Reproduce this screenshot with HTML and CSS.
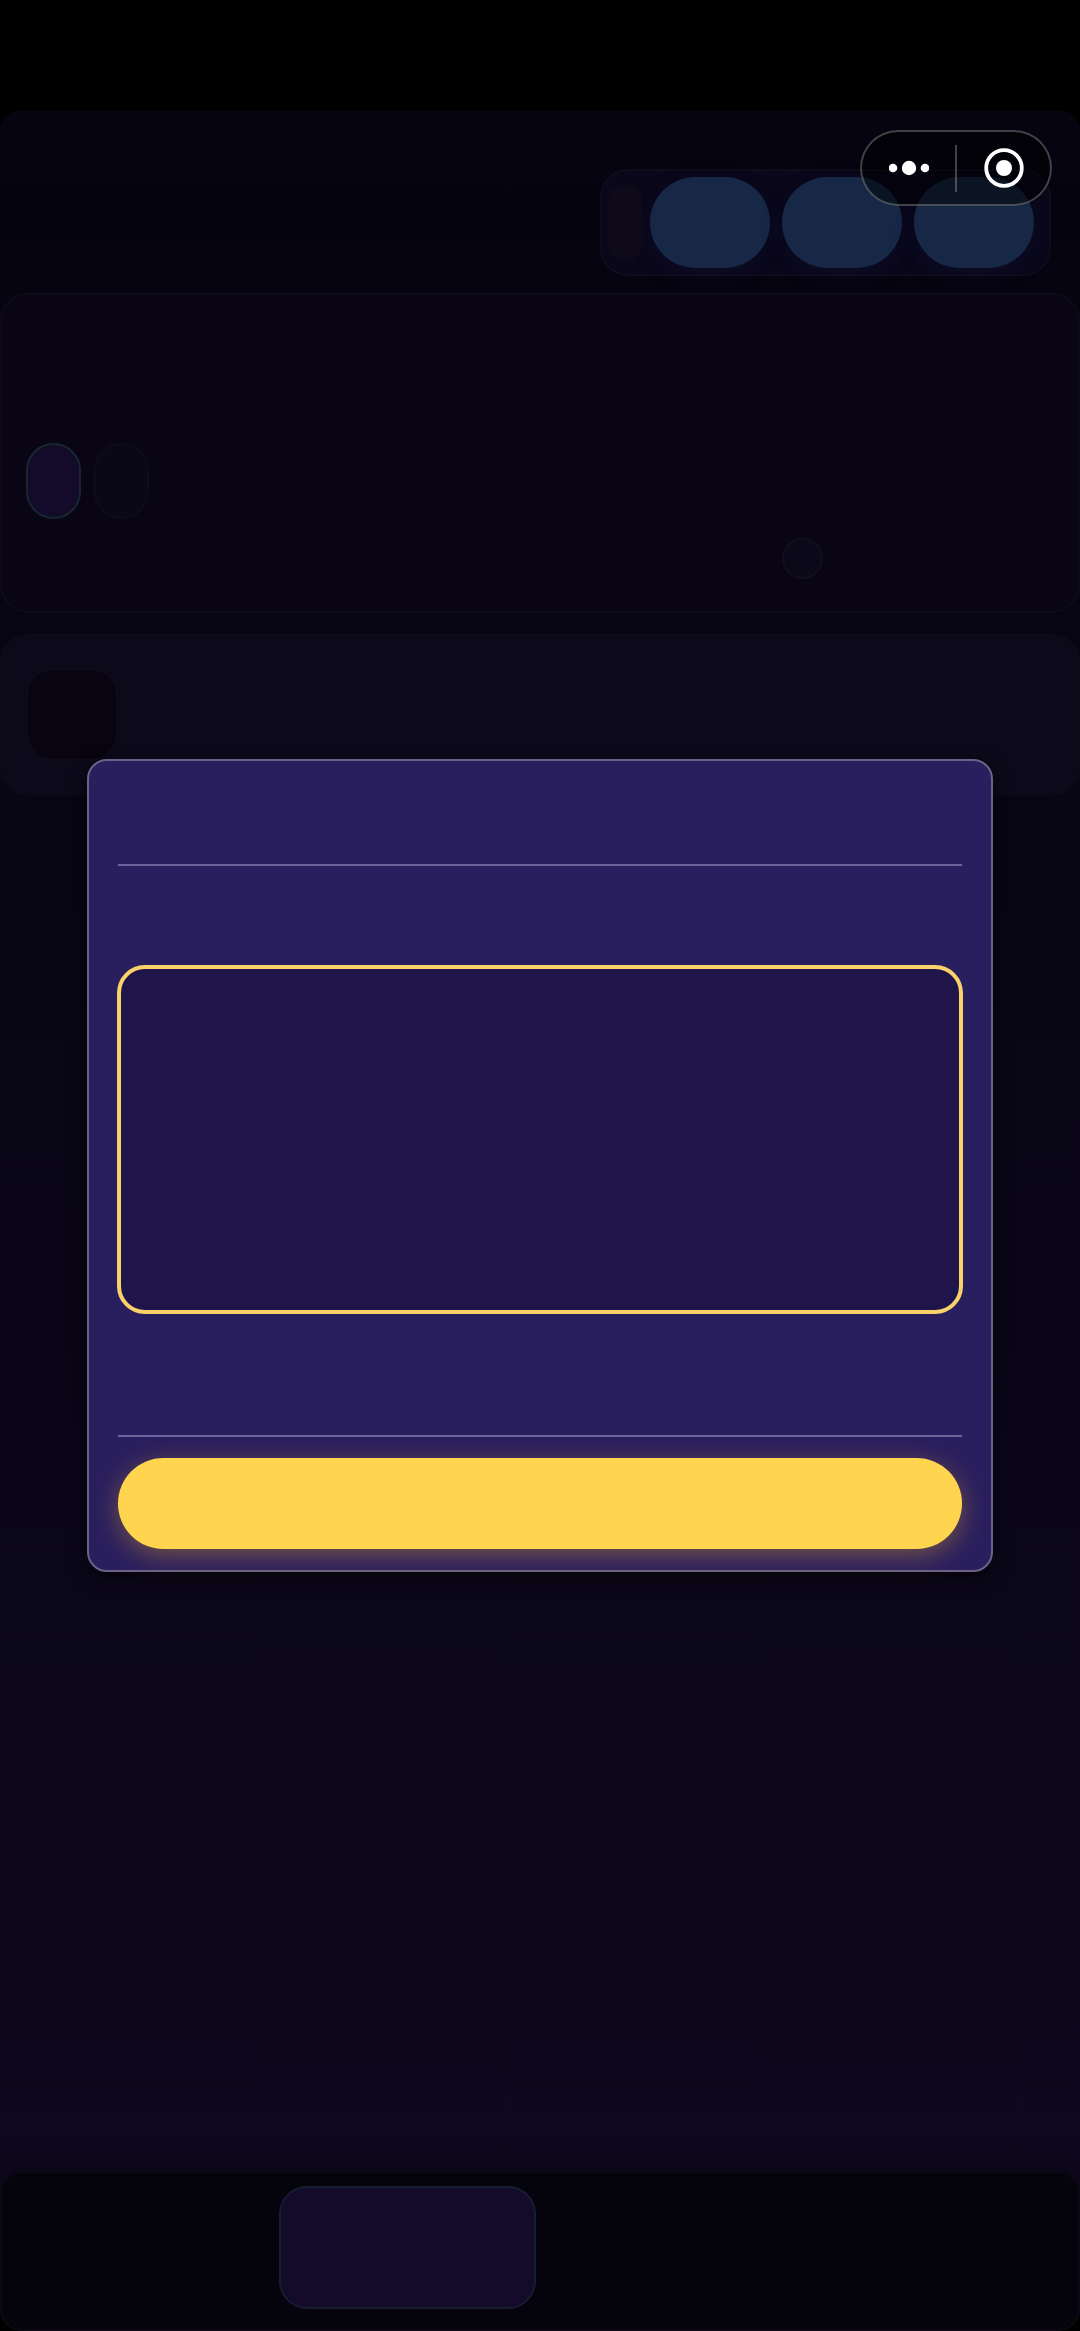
FILE: index.html
```html
<!DOCTYPE html>
<html lang="en">
<head>
    <meta charset="UTF-8">
    <meta name="viewport" content="width=device-width, initial-scale=1.0">
    <title>Home</title>
    <link rel="stylesheet" href="styles.css">
</head>
<body>
    <div class="status-bar"></div>

    <div class="page">
        <!-- top bar -->
        <header class="top">
            <div class="tools">
                <span class="tools-tag"></span>
                <button type="button" class="tool" aria-label="Tool 1"></button>
                <button type="button" class="tool" aria-label="Tool 2"></button>
                <button type="button" class="tool" aria-label="Tool 3"></button>
            </div>
        </header>

        <main class="content">
            <section class="card filter">
                <div class="chips">
                    <button type="button" class="chip active" aria-label="Filter 1"></button>
                    <button type="button" class="chip" aria-label="Filter 2"></button>
                </div>
                <div class="marker-row">
                    <span class="marker"></span>
                </div>
            </section>

            <section class="card item">
                <div class="thumb"></div>
            </section>
        </main>

        <!-- bottom tabs -->
        <nav class="tabs">
            <a href="#" class="tab" aria-label="Tab 1"></a>
            <a href="#" class="tab active" aria-label="Tab 2"></a>
            <a href="#" class="tab" aria-label="Tab 3"></a>
            <a href="#" class="tab" aria-label="Tab 4"></a>
        </nav>
    </div>

    <!-- dialog -->
    <div class="overlay">
        <div class="modal" role="dialog" aria-label="Notice">
            <div class="modal-head"></div>
            <div class="modal-body">
                <div class="modal-box"></div>
            </div>
            <div class="modal-foot">
                <button type="button" class="confirm" aria-label="Confirm"></button>
            </div>
        </div>
    </div>

    <!-- menu / close capsule -->
    <div class="capsule">
        <button type="button" class="capsule-btn" aria-label="Menu">
            <svg width="40" height="40" viewBox="0 0 40 40" fill="#fff">
                <circle cx="4" cy="20" r="4.3"/>
                <circle cx="20" cy="20" r="7.2"/>
                <circle cx="36" cy="20" r="4.3"/>
            </svg>
        </button>
        <span class="capsule-line"></span>
        <button type="button" class="capsule-btn" aria-label="Close">
            <svg width="40" height="40" viewBox="0 0 40 40">
                <circle cx="20" cy="20" r="17.8" fill="none" stroke="#fff" stroke-width="3.8"/>
                <circle cx="20" cy="20" r="8" fill="#fff"/>
            </svg>
        </button>
    </div>
</body>
</html>
```

FILE: styles.css
```css
* {
    box-sizing: border-box;
}

body {
    margin: 0;
    min-height: 100vh;
    display: flex;
    flex-direction: column;
    background-color: #000;
    font-family: "Liberation Sans", Arial, sans-serif;
}

button {
    margin: 0;
    padding: 0;
    border: 0;
    background: none;
}

.status-bar {
    height: 111px;
}

.page {
    flex: 1;
    display: flex;
    flex-direction: column;
    border-radius: 20px 20px 0 0;
    background: linear-gradient(#060410 0, #080514 30%, #0e081e 94%, #000 94%);
}

/* top bar */
.top {
    display: flex;
    justify-content: flex-end;
    padding: 58px 29px 17px;
    border-radius: 20px 20px 0 0;
    background: linear-gradient(#060411, #05030f 60%, #070411);
}

.tools {
    display: flex;
    align-items: center;
    gap: 12px;
    padding: 6px 15px 6px 6px;
    border: 2px solid #0f0d1c;
    border-radius: 28px;
    background-color: #0a071a;
}

.tools-tag {
    width: 35px;
    height: 75px;
    margin-right: -5px;
    border-radius: 16px;
    background-color: #0f0a1a;
}

.tool {
    width: 120px;
    height: 91px;
    border-radius: 46px;
    background-color: #172846;
    box-shadow: 0 8px 24px rgba(23, 40, 90, 0.12);
}

/* cards */
.content {
    display: flex;
    flex-direction: column;
    gap: 21px;
}

.card {
    border: 2px solid #0e0b18;
    border-radius: 28px;
}

.filter {
    padding: 148px 24px 32px;
    background-color: #090514;
}

.chips {
    display: flex;
    gap: 13px;
}

.chip {
    width: 55px;
    height: 76px;
    border: 2px solid #0f0c19;
    border-radius: 28px;
    background-color: #0a0716;
}

.chip.active {
    border-color: #162632;
    background-color: #130b29;
}

.marker-row {
    display: flex;
    justify-content: flex-end;
    margin-top: 19px;
    padding-right: 231px;
}

.marker {
    width: 41px;
    height: 41px;
    border: 2px solid #120f1c;
    border-radius: 50%;
    background-color: #0b0819;
}

.item {
    padding: 32px 24px;
    background-color: #0c091a;
}

.thumb {
    width: 92px;
    height: 93px;
    border: 2px solid #0f0b19;
    border-radius: 26px;
    background-color: #080412;
}

/* bottom tabs */
.tabs {
    display: flex;
    gap: 12px;
    margin-top: auto;
    padding: 13px 12px 20px;
    border: 2px solid #0c0915;
    border-radius: 22px;
    background-color: #05030c;
    box-shadow: 0 -8px 24px rgba(0, 0, 0, 0.25);
}

.tab {
    flex: 1;
    height: 123px;
    border-radius: 28px;
}

.tab.active {
    border: 2px solid #151e31;
    background-color: #130b29;
}

/* dialog */
.overlay {
    position: fixed;
    top: 0;
    right: 0;
    bottom: 0;
    left: 0;
    display: flex;
    align-items: center;
    justify-content: center;
    padding: 0 87px;
}

.modal {
    flex: 1;
    padding: 0 29px;
    border: 2px solid #6c6188;
    border-radius: 20px;
    background-color: #2a1f5e;
    box-shadow: 0 6px 18px rgba(0, 0, 0, 0.6);
}

.modal-head {
    height: 105px;
    border-bottom: 2px solid #6e629a;
}

.modal-body {
    margin: 0 -1px;
    padding: 99px 0 121px;
}

.modal-box {
    height: 349px;
    border: 4px solid #fad269;
    border-radius: 28px;
    background-color: #20154b;
}

.modal-foot {
    padding: 21px 0;
    border-top: 2px solid #6e629a;
}

.confirm {
    display: block;
    width: 100%;
    height: 91px;
    border-radius: 46px;
    background-color: #ffd54f;
    box-shadow: 0 6px 24px rgba(255, 179, 30, 0.35);
}

/* capsule floats over the top bar */
.capsule {
    position: absolute;
    top: 130px;
    right: 28px;
    width: 192px;
    height: 76px;
    display: flex;
    align-items: center;
    border: 2px solid rgba(255, 255, 255, 0.25);
    border-radius: 38px;
    background-color: rgba(0, 0, 0, 0.5);
}

.capsule-btn {
    flex: 1;
    display: flex;
    align-items: center;
    justify-content: center;
}

.capsule-line {
    width: 2px;
    height: 47px;
    background-color: rgba(255, 255, 255, 0.25);
}
```
